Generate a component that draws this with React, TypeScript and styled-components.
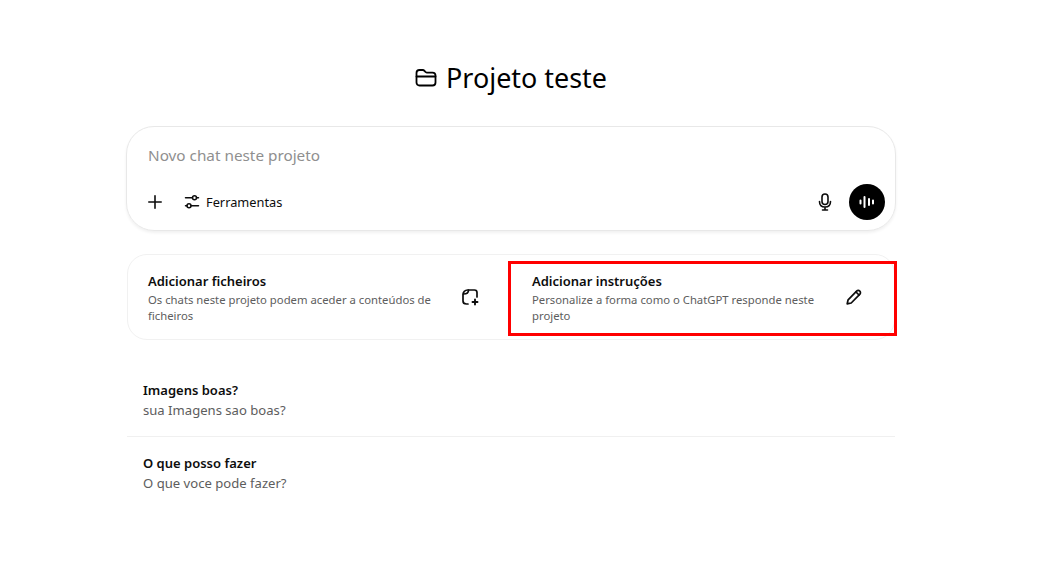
import React from "react";
import styled, { createGlobalStyle } from "styled-components";

const Global = createGlobalStyle`
  html, body { margin: 0; padding: 0; background: #fff; }
  body { font-family: "Noto Sans", "Open Sans", sans-serif; color: #0d0d0d; }
`;

const Page = styled.main`
  width: 768px;
  margin: 0 0 0 127px;
  padding-top: 58px;
  display: flex;
  flex-direction: column;
`;

const Title = styled.h1`
  margin: 0 0 29px;
  height: 39px;
  display: flex;
  align-items: center;
  justify-content: center;
  gap: 9px;
  font-size: 26.9px;
  line-height: 39px;
  font-weight: 400;
  color: #000;
`;

const Composer = styled.section`
  box-sizing: border-box;
  height: 105px;
  margin: 0 -1px;
  border: 1px solid #e8e8e8;
  border-radius: 28px;
  box-shadow: 0 2px 3px rgba(0, 0, 0, 0.06);
  padding: 17px 10px 10px 21px;
  display: flex;
  flex-direction: column;
  justify-content: space-between;
`;

const Placeholder = styled.div`
  font-size: 15.3px;
  line-height: 22px;
  color: #8f8f8f;
`;

const ToolRow = styled.div`
  display: flex;
  align-items: center;
  height: 36px;
`;

const PlusIcon = styled.svg`
  width: 14px;
  height: 14px;
  margin-right: 22px;
`;

const Tools = styled.div`
  display: flex;
  align-items: center;
  gap: 6px;
  font-size: 12.8px;
  color: #0d0d0d;
  flex: 1;
`;

const MicIcon = styled.svg`
  width: 20px;
  height: 20px;
  margin-right: 14px;
`;

const VoiceButton = styled.div`
  width: 36px;
  height: 36px;
  border-radius: 50%;
  background: #000;
  display: flex;
  align-items: center;
  justify-content: center;
`;

const Cards = styled.section`
  position: relative;
  box-sizing: border-box;
  margin-top: 23px;
  height: 86px;
  border: 1px solid #f1f1f1;
  border-radius: 20px;
  display: grid;
  grid-template-columns: 380px 1fr;
`;

const Card = styled.div<{ $left: number }>`
  box-sizing: border-box;
  padding: 17px 0 0 ${(p) => p.$left}px;
  display: flex;
  position: relative;
`;

const CardText = styled.div`
  width: 300px;
`;

const CardTitle = styled.div`
  font-size: 13px;
  line-height: 19px;
  font-weight: 600;
  color: #0d0d0d;
`;

const CardDesc = styled.div`
  font-size: 11.3px;
  line-height: 16px;
  color: #5d5d5d;
  margin-top: 1px;
`;

const CardIcon = styled.svg<{ $x: number }>`
  width: 20px;
  height: 20px;
  position: absolute;
  top: 32px;
  left: ${(p) => p.$x}px;
`;

const Highlight = styled.div`
  position: absolute;
  left: 380px;
  top: 6px;
  width: 389px;
  height: 75px;
  box-sizing: border-box;
  border: 3px solid #f00;
  pointer-events: none;
`;

const Chats = styled.section`
  margin-top: 28px;
`;

const ChatRow = styled.div<{ $divider?: boolean }>`
  box-sizing: border-box;
  height: 69px;
  padding: 12px 0 0 16px;
  border-bottom: ${(p) => (p.$divider ? "1px solid #f0f0f0" : "none")};
  margin-bottom: ${(p) => (p.$divider ? "4px" : "0")};
`;

const ChatTitle = styled.div`
  font-size: 13px;
  line-height: 20px;
  font-weight: 600;
  color: #0d0d0d;
`;

const ChatSub = styled.div`
  font-size: 13.1px;
  line-height: 20px;
  color: #5d5d5d;
`;

const Stroke = { fill: "none", stroke: "currentColor", strokeLinecap: "round", strokeLinejoin: "round" } as const;

export default function App() {
  return (
    <>
      <Global />
      <Page>
        <Title>
          <svg width="22" height="22" viewBox="0 0 22 22" {...Stroke} strokeWidth="1.8">
            <path d="M1.500 6C1.500 4.200 2.700 3 4.500 3h3.200c.8 0 1.300.3 1.800.9l.7.9c.4.5.9.8 1.600.8h5.700c1.800 0 3 1.200 3 3v6.900c0 1.800-1.200 3-3 3h-13c-1.800 0-3-1.200-3-3V6z" />
            <path d="M1.500 9.500h19" />
          </svg>
          Projeto teste
        </Title>
        <Composer>
          <Placeholder>Novo chat neste projeto</Placeholder>
          <ToolRow>
            <PlusIcon viewBox="0 0 14 14" {...Stroke} strokeWidth="1.6">
              <path d="M7 .8v12.400M.8 7h12.400" />
            </PlusIcon>
            <Tools>
              <svg width="16" height="16" viewBox="0 0 16 16" {...Stroke} strokeWidth="1.5">
                <path d="M1.500 3.800h7M12.500 3.800h2M1.500 11.800h1.500M7 11.800h7.500" />
                <circle cx="10.500" cy="3.800" r="2" />
                <circle cx="5" cy="11.800" r="2" />
              </svg>
              Ferramentas
            </Tools>
            <MicIcon viewBox="0 0 20 20" {...Stroke} strokeWidth="1.600">
              <rect x="7" y="2" width="6" height="10.500" rx="3" />
              <path d="M4.500 9.500c0 3.400 2.300 5.500 5.500 5.500s5.500-2.100 5.500-5.500M10 15v3M7.500 18h5" />
            </MicIcon>
            <VoiceButton>
              <svg width="18" height="18" viewBox="0 0 18 18" fill="none" stroke="#fff" strokeWidth="2" strokeLinecap="round">
                <path d="M2.500 7.500v3M6.500 4v10M11 6v6M15 7.500v3" />
              </svg>
            </VoiceButton>
          </ToolRow>
        </Composer>
        <Cards>
          <Card $left={20}>
            <CardText>
              <CardTitle>Adicionar ficheiros</CardTitle>
              <CardDesc>Os chats neste projeto podem aceder a conteúdos de ficheiros</CardDesc>
            </CardText>
            <CardIcon $x={332} viewBox="0 0 20 20" {...Stroke} strokeWidth="1.7">
              <path d="M8 17H6.500C4.500 17 3 15.700 3 14V7.500C3 5 5 3 7.500 3H14.500c1.500 0 2.500 1 2.500 2.500V10" />
              <path d="M3.500 7C6 7 8.500 6.500 8.500 3.200" />
              <path d="M15 12.500v5M12.500 15h5" strokeWidth="1.900" />
            </CardIcon>
          </Card>
          <Card $left={24}>
            <CardText>
              <CardTitle>Adicionar instruções</CardTitle>
              <CardDesc>Personalize a forma como o ChatGPT responde neste projeto</CardDesc>
            </CardText>
            <CardIcon $x={336} viewBox="0 0 20 20" {...Stroke} strokeWidth="1.700">
              <path d="M3.200 16.800l.9-4L12.600 4.200c1-1 2.300-1 3.200-.1s.9 2.200-.1 3.200L7.200 16l-4 .8z" />
              <path d="M12 5l3 3" />
            </CardIcon>
          </Card>
          <Highlight />
        </Cards>
        <Chats>
          <ChatRow $divider>
            <ChatTitle>Imagens boas?</ChatTitle>
            <ChatSub>sua Imagens sao boas?</ChatSub>
          </ChatRow>
          <ChatRow>
            <ChatTitle>O que posso fazer</ChatTitle>
            <ChatSub>O que voce pode fazer?</ChatSub>
          </ChatRow>
        </Chats>
      </Page>
    </>
  );
}
